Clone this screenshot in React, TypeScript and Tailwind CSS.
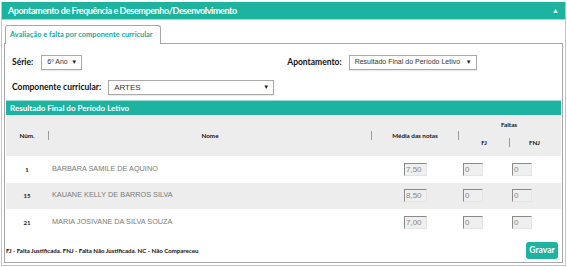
import React from 'react';

const teal = 'bg-[#1db3a1]';

type Aluno = { num: number; nome: string; media: string; fj: string; fnj: string };

const alunos: Aluno[] = [
  { num: 1, nome: 'BARBARA SAMILE DE AQUINO', media: '7,50', fj: '0', fnj: '0' },
  { num: 15, nome: 'KAUANE KELLY DE BARROS SILVA', media: '8,50', fj: '0', fnj: '0' },
  { num: 21, nome: 'MARIA JOSIVANE DA SILVA SOUZA', media: '7,00', fj: '0', fnj: '0' },
];

const Select: React.FC<{ value: string; className: string }> = ({ value, className }) => (
  <div
    className={`flex items-center justify-between border border-[#a9a9a9] bg-white pl-[5px] pr-[4px] text-[7px] text-[#333] shadow-[0_1px_1px_rgba(0,0,0,0.08)] ${className}`}
    style={{ fontFamily: '"Liberation Sans", Arial, sans-serif' }}
  >
    <span>{value}</span>
    <span className="text-[6px] text-[#222]">▼</span>
  </div>
);

const NumInput: React.FC<{ value: string; w: string }> = ({ value, w }) => (
  <div
    className={`h-[13px] ${w} border-t border-l border-t-[#8a8a8a] border-l-[#8a8a8a] border-b border-r border-b-[#e5e5e5] border-r-[#e5e5e5] bg-[#efefef] pl-[1px] text-[8px] leading-[12px] text-[#888]`}
    style={{ fontFamily: '"Liberation Sans", Arial, sans-serif' }}
  >
    {value}
  </div>
);

const Sep: React.FC = () => <span className="inline-block h-[9px] w-px bg-[#9a9a9a]" />;

export default function App() {
  return (
    <div className="h-[267px] w-[567px] bg-white pt-[2px] pl-[1px]" style={{ fontFamily: 'Lato, "Open Sans", sans-serif' }}>
      <div className="w-[565px] border-x border-b border-[#c4c4c4] pb-[1px]">
        {/* cabeçalho */}
        <div className={`flex h-[18px] items-center justify-between ${teal} border-b border-[#9fdcd3] pl-[6px] pr-[6px]`}>
          <span className="text-[9px] font-bold tracking-[-0.4px] text-white">
            Apontamento de Frequência e Desempenho/Desenvolvimento
          </span>
          <span className="text-[7px] text-white">▲</span>
        </div>

        <div className="px-[2px] pt-[5px] pb-[1px]">
          {/* aba */}
          <div className="ml-[1px] flex">
            <div className="relative z-10 -mb-px flex h-[19px] w-[156px] items-center rounded-t-[3px] border border-b-0 border-[#a8a8a8] bg-white pl-[4px] text-[7.4px] font-bold text-[#1aa896]">
              Avaliação e falta por componente curricular
            </div>
          </div>

          <div className="h-[220px] border border-[#a8a8a8] bg-white">
            {/* filtros */}
            <div className="flex h-[26px] items-end pl-[7px]">
              <div className="flex items-center">
                <span className="mr-[8px] text-[8.5px] font-bold text-[#111]">Série:</span>
                <Select value="6º Ano" className="h-[15px] w-[41px]" />
              </div>
              <div className="ml-[205px] flex items-center">
                <span className="mr-[7px] text-[8.5px] font-bold text-[#111]">Apontamento:</span>
                <Select value="Resultado Final do Período Letivo" className="h-[15px] w-[128px]" />
              </div>
            </div>
            <div className="mt-[10px] flex h-[15px] items-center pl-[7px]">
              <span className="mr-[7px] text-[8.5px] font-bold text-[#111]">Componente curricular:</span>
              <Select value="ARTES" className="h-[15px] w-[166px] text-[8px]" />
            </div>

            {/* tabela */}
            <div className="mx-[1px] mt-[5px]">
              <div className={`flex h-[15px] items-center ${teal} border-t border-[#9fdcd3] pl-[4px] text-[8px] font-bold text-white`}>
                Resultado Final do Período Letivo
              </div>
              <div className="grid h-[41px] grid-cols-[42px_324px_87px_50px_50px] bg-[#ededed] text-[6.3px] font-bold text-[#111]">
                <div className="flex items-center justify-center">Núm.</div>
                <div className="flex items-center">
                  <Sep />
                  <span className="flex-1 text-center">Nome</span>
                  <Sep />
                </div>
                <div className="flex items-center">
                  <span className="flex-1 text-center">Média das notas</span>
                  <Sep />
                </div>
                <div className="col-span-2 flex flex-col">
                  <div className="flex h-[14px] items-end justify-center">Faltas</div>
                  <div className="flex flex-1 items-center">
                    <span className="w-[50px] text-center">FJ</span>
                    <Sep />
                    <span className="flex-1 text-center">FNJ</span>
                  </div>
                </div>
              </div>
              {alunos.map((a, i) => (
                <div
                  key={a.num}
                  className={`grid h-[26.5px] grid-cols-[42px_324px_87px_50px_50px] items-center ${i % 2 === 1 ? 'bg-[#ededed]' : 'bg-white'}`}
                >
                  <div className="text-center text-[6px] font-bold text-[#222]">{a.num}</div>
                  <div
                    className="pl-[4px] text-[7.3px] text-[#7a7a7a]"
                    style={{ fontFamily: '"Liberation Sans", Arial, sans-serif' }}
                  >
                    {a.nome}
                  </div>
                  <div className="flex justify-end pr-[32px]">
                    <NumInput value={a.media} w="w-[23px]" />
                  </div>
                  <div className="flex pl-[4px]">
                    <NumInput value={a.fj} w="w-[20px]" />
                  </div>
                  <div className="flex pl-[3px]">
                    <NumInput value={a.fnj} w="w-[20px]" />
                  </div>
                </div>
              ))}
              <div className="flex items-start justify-between pt-[6px] pr-[3px]">
                <span className="pt-[4px] text-[6.1px] font-bold text-[#111]">
                  FJ - Falta Justificada. FNJ - Falta Não Justificada. NC - Não Compareceu
                </span>
                <button className={`h-[17px] w-[32px] rounded-[3px] ${teal} text-[8.5px] font-bold text-white`}>
                  Gravar
                </button>
              </div>
            </div>
          </div>
        </div>
      </div>
    </div>
  );
}
